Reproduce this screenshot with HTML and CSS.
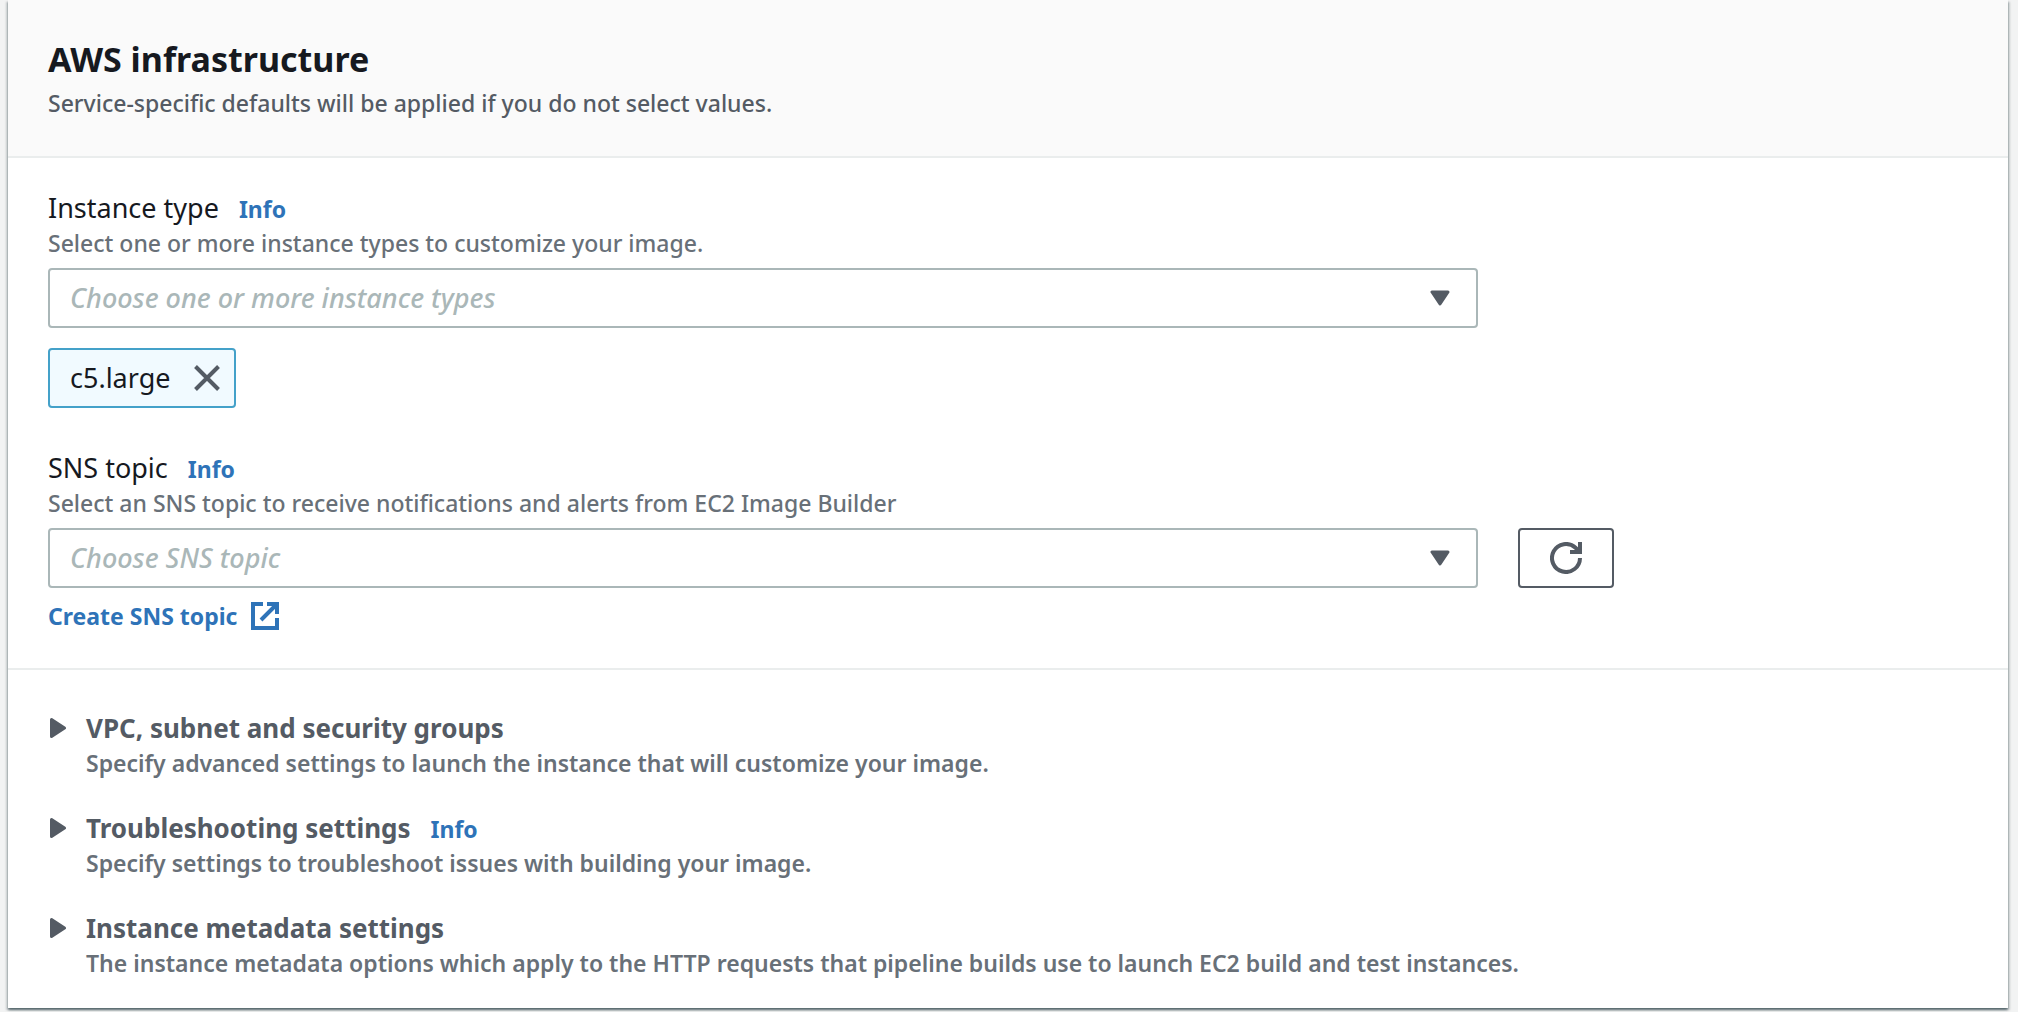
FILE: index.html
```html
<!DOCTYPE html>
<html lang="en">
<head>
<meta charset="utf-8">
<meta name="viewport" content="width=device-width, initial-scale=1">
<title>AWS infrastructure</title>
<link rel="stylesheet" href="styles.css">
</head>
<body>
<main class="page">
  <section class="panel">
    <header class="panel-header">
      <h2 class="panel-title">AWS infrastructure</h2>
      <p class="panel-description">Service-specific defaults will be applied if you do not select values.</p>
    </header>

    <div class="panel-body">
      <div class="field">
        <div class="field-heading">
          <label class="field-label" for="instance-type">Instance type</label>
          <a class="link" href="#instance-type-info">Info</a>
        </div>
        <p class="hint">Select one or more instance types to customize your image.</p>
        <div class="control-row">
          <div class="select-wrap">
            <select class="select" id="instance-type">
              <option>Choose one or more instance types</option>
            </select>
            <svg class="select-caret" viewBox="0 0 20 16" aria-hidden="true"><path d="M2 2h16l-8 12z"/></svg>
          </div>
        </div>
        <div class="token">
          <span>c5.large</span>
          <button class="token-remove" type="button" aria-label="Remove c5.large">
            <svg class="close-icon" viewBox="0 0 26 26" aria-hidden="true"><path d="M1.500 1.500l23 23M24.500 1.500l-23 23"/></svg>
          </button>
        </div>
      </div>

      <div class="field">
        <div class="field-heading">
          <label class="field-label" for="sns-topic">SNS topic</label>
          <a class="link" href="#sns-topic-info">Info</a>
        </div>
        <p class="hint">Select an SNS topic to receive notifications and alerts from EC2 Image Builder</p>
        <div class="control-row">
          <div class="select-wrap">
            <select class="select" id="sns-topic">
              <option>Choose SNS topic</option>
            </select>
            <svg class="select-caret" viewBox="0 0 20 16" aria-hidden="true"><path d="M2 2h16l-8 12z"/></svg>
          </div>
          <button class="refresh" type="button" aria-label="Refresh SNS topics">
            <svg class="refresh-icon" viewBox="0 0 32 32" aria-hidden="true"><path d="M30 16A14 14 0 1 1 25.500 5.700L30 10"/><path d="M30 0v10H20"/></svg>
          </button>
        </div>
        <a class="link external" href="#create-sns-topic">Create SNS topic
          <svg class="external-icon" viewBox="0 0 28 28" aria-hidden="true"><path d="M12 2H2v24h24V16"/><path d="M16 2h10v10M25 3L10 18"/></svg>
        </a>
      </div>
    </div>

    <div class="panel-advanced">
      <details class="section">
        <summary class="section-summary">
          <svg class="section-caret" viewBox="0 0 18 22" aria-hidden="true"><path d="M3.500 2.500v17l13-8.500z"/></svg>
          <span class="section-text">
            <span class="section-title">VPC, subnet and security groups</span>
            <span class="section-hint">Specify advanced settings to launch the instance that will customize your image.</span>
          </span>
        </summary>
      </details>
      <details class="section">
        <summary class="section-summary">
          <svg class="section-caret" viewBox="0 0 18 22" aria-hidden="true"><path d="M3.500 2.500v17l13-8.500z"/></svg>
          <span class="section-text">
            <span class="section-title">Troubleshooting settings <a class="link" href="#troubleshooting-info">Info</a></span>
            <span class="section-hint">Specify settings to troubleshoot issues with building your image.</span>
          </span>
        </summary>
      </details>
      <details class="section">
        <summary class="section-summary">
          <svg class="section-caret" viewBox="0 0 18 22" aria-hidden="true"><path d="M3.500 2.500v17l13-8.500z"/></svg>
          <span class="section-text">
            <span class="section-title">Instance metadata settings</span>
            <span class="section-hint">The instance metadata options which apply to the HTTP requests that pipeline builds use to launch EC2 build and test instances.</span>
          </span>
        </summary>
      </details>
    </div>
  </section>
</main>
</body>
</html>
```
FILE: styles.css
```css
* {
  box-sizing: border-box;
}

body {
  margin: 0;
  background: #f2f3f3;
  color: #16191f;
  font-family: "Noto Sans", "Open Sans", sans-serif;
  font-size: 27px;
  line-height: 36px;
}

h2,
p {
  margin: 0;
}

.page {
  padding: 0 10px 4px 8px;
}

.panel {
  background: #fff;
  box-shadow:
    0 2px 2px 0 rgba(0, 28, 36, 0.5),
    2px 2px 2px 0 rgba(0, 28, 36, 0.15),
    -2px 2px 2px 0 rgba(0, 28, 36, 0.15);
}

.panel-header {
  padding: 37px 40px 35px;
  background: #fafafa;
  border-bottom: 2px solid #eaeded;
}

.panel-title {
  margin-bottom: 4px;
  font-size: 34px;
  line-height: 44px;
  font-weight: 700;
}

.panel-description {
  color: #545b64;
  font-size: 23px;
  font-weight: 500;
}

.panel-body {
  display: flex;
  flex-direction: column;
  gap: 42px;
  padding: 32px 40px 34px;
  border-bottom: 2px solid #eaeded;
}

.field-heading,
.section-title {
  display: flex;
  align-items: baseline;
  gap: 20px;
}

.link {
  color: #2e73b8;
  font-size: 23px;
  line-height: 32px;
  font-weight: 700;
  text-decoration: none;
}

.hint {
  margin-bottom: 8px;
  color: #687078;
  font-size: 23px;
  line-height: 34px;
  font-weight: 500;
}

.control-row {
  display: grid;
  grid-template-columns: repeat(12, minmax(0, 1fr));
  gap: 40px;
}

.select-wrap {
  display: grid;
  grid-column: span 9;
  align-items: center;
}

.select-wrap > * {
  grid-area: 1 / 1;
}

.select {
  width: 100%;
  height: 60px;
  padding: 0 60px 0 20px;
  appearance: none;
  background: #fff;
  border: 2px solid #aab7b8;
  border-radius: 4px;
  color: #aab7b8;
  font: inherit;
  font-style: italic;
  font-weight: 500;
}

.select-caret {
  justify-self: end;
  width: 20px;
  height: 16px;
  margin-right: 28px;
  pointer-events: none;
}

.select-caret,
.section-caret {
  fill: #545b64;
  stroke: #545b64;
  stroke-width: 3;
  stroke-linejoin: round;
}

.token {
  display: flex;
  align-items: center;
  gap: 24px;
  width: fit-content;
  height: 60px;
  margin-top: 20px;
  padding: 0 14px 0 20px;
  background: #f1faff;
  border: 2px solid #44a1c9;
  border-radius: 4px;
}

.token-remove {
  display: flex;
  padding: 0;
  background: none;
  border: 0;
}

.close-icon {
  width: 26px;
  height: 26px;
  fill: none;
  stroke: #545b64;
  stroke-width: 4;
}

.refresh {
  display: flex;
  align-items: center;
  justify-content: center;
  width: 96px;
  height: 60px;
  padding: 0;
  background: #fff;
  border: 2px solid #545b64;
  border-radius: 4px;
}

.refresh-icon {
  width: 32px;
  height: 32px;
  fill: none;
  stroke: #545b64;
  stroke-width: 4;
}

.external {
  display: flex;
  align-items: center;
  gap: 14px;
  width: fit-content;
  margin-top: 12px;
  margin-bottom: 2px;
}

.external-icon {
  width: 28px;
  height: 28px;
  fill: none;
  stroke: currentColor;
  stroke-width: 4;
}

.panel-advanced {
  display: flex;
  flex-direction: column;
  gap: 30px;
  padding: 40px 40px 28px;
}

.section-summary {
  display: flex;
  align-items: flex-start;
  gap: 20px;
  list-style: none;
  cursor: pointer;
}

.section-caret {
  flex: none;
  width: 18px;
  height: 22px;
  margin-top: 7px;
}

.section-text {
  display: flex;
  flex-direction: column;
}

.section-title {
  color: #545b64;
  font-size: 26px;
  font-weight: 700;
}

.section-hint {
  color: #687078;
  font-size: 23px;
  line-height: 34px;
  font-weight: 640;
}
```
